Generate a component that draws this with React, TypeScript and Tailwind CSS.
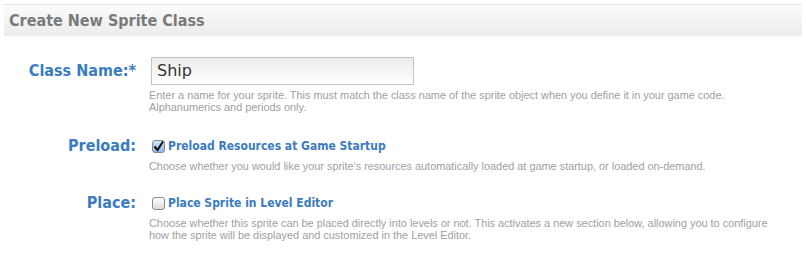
const Row = ({
  label,
  children,
  className,
}: {
  label: string;
  children: React.ReactNode;
  className?: string;
}) => (
  <div className={"flex items-start " + (className ?? "")}>
    <div className="w-[133px] shrink-0 text-right pr-[1px] text-[16px] font-bold text-[#3b7bbf] leading-[28px] font-['DejaVu_Sans_Condensed','DejaVu_Sans',sans-serif]">
      {label}
    </div>
    <div className="ml-[12px] flex-1">{children}</div>
  </div>
);

const Help = ({ children }: { children: React.ReactNode }) => (
  <p className="text-[10.9px] leading-[12px] text-[#a0a0a0] font-['Liberation_Sans',Arial,sans-serif]">
    {children}
  </p>
);

const Check = ({ checked, label }: { checked: boolean; label: string }) => (
  <label className="flex items-center gap-[3px] h-[20px]">
    <span
      className={
        "w-[13px] h-[13px] rounded-[3px] border border-[#8a8a8a] flex items-center justify-center " +
        (checked ? "bg-gradient-to-b from-[#cfe3fb] to-[#8fb6e8]" : "bg-gradient-to-b from-white to-[#dcdcdc]")
      }
    >
      {checked && (
        <svg width="11" height="11" viewBox="0 0 11 11">
          <path d="M1.5 5.5 L4.5 9 L10 0.5" fill="none" stroke="#111" strokeWidth="2" />
        </svg>
      )}
    </span>
    <span className="text-[12px] font-bold text-[#3b7bbf] font-['DejaVu_Sans_Condensed','DejaVu_Sans',sans-serif]">
      {label}
    </span>
  </label>
);

export default function App() {
  return (
    <div className="w-[806px] h-[254px] bg-white pt-[4px] px-[4px]">
      <div className="h-[32px] border-t border-[#e3e3e3] bg-gradient-to-b from-[#fbfbfb] to-[#ececec] pl-[5px] flex items-center">
        <h1 className="text-[16px] font-bold text-[#7a7a7a] font-['DejaVu_Sans_Condensed','DejaVu_Sans',sans-serif]">
          Create New Sprite Class
        </h1>
      </div>

      <Row label="Class Name:*" className="mt-[21px]">
        <div className="ml-[2px] w-[263px] h-[28px] border border-[#c4c4c4] bg-gradient-to-b from-[#ececec] to-white flex items-center pl-[5px] text-[16px] text-[#333] font-['DejaVu_Sans',sans-serif]">
          Ship
        </div>
        <div className="mt-[4px]">
          <Help>
            Enter a name for your sprite. This must match the class name of the sprite object when you define it in your game code.
            <br />
            Alphanumerics and periods only.
          </Help>
        </div>
      </Row>

      <Row label="Preload:" className="mt-[19px]">
        <div className="pt-[4px] ml-[3px]">
          <Check checked label="Preload Resources at Game Startup" />
        </div>
        <div className="mt-[4px]">
          <Help>
            Choose whether you would like your sprite's resources automatically loaded at game startup, or loaded on-demand.
          </Help>
        </div>
      </Row>

      <Row label="Place:" className="mt-[17px]">
        <div className="pt-[4px] ml-[3px]">
          <Check checked={false} label="Place Sprite in Level Editor" />
        </div>
        <div className="mt-[4px]">
          <Help>
            Choose whether this sprite can be placed directly into levels or not. This activates a new section below, allowing you to configure
            <br />
            how the sprite will be displayed and customized in the Level Editor.
          </Help>
        </div>
      </Row>
    </div>
  );
}
